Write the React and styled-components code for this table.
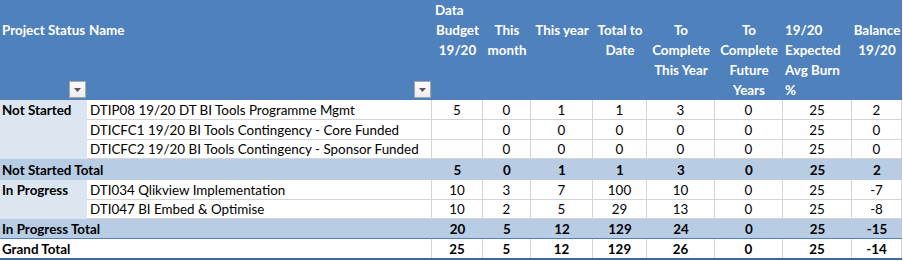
import React from "react";
import styled, { createGlobalStyle } from "styled-components";

const GlobalStyle = createGlobalStyle`
  html, body { margin: 0; padding: 0; background: #ffffff; }
  body { font-family: Lato, "Liberation Sans", sans-serif; font-size: 13.4px; color: #000; }
`;

const NUM_COLS = "51px 48px 62px 54px 68px 68px 69px 50px";
const DATA_COLS = `345px ${NUM_COLS}`;
const FULL_COLS = `87px ${DATA_COLS}`;

const Sheet = styled.div`
  width: 902px;
  display: flex;
  flex-direction: column;
`;

const Header = styled.div`
  display: grid;
  grid-template-columns: ${FULL_COLS};
  grid-template-rows: 20px 80px;
  background: #4f81bd;
  color: #ffffff;
  font-weight: 700;
  line-height: 20px;
`;

const DataLabel = styled.div`
  grid-column: 3;
  grid-row: 1;
  padding-left: 3px;
  white-space: nowrap;
`;

const FieldHead = styled.div`
  grid-row: 2;
  grid-column: ${(p) => p.$col};
  display: flex;
  flex-direction: column;
  padding-left: 2px;
  white-space: nowrap;
`;

const ColHead = styled.div`
  grid-row: 2;
  text-align: ${(p) => (p.$left ? "left" : "center")};
  padding-left: ${(p) => (p.$left ? "2px" : "0")};
  white-space: nowrap;
`;

const FilterButton = styled.div`
  margin-top: auto;
  margin-bottom: 2px;
  margin-right: 1px;
  align-self: flex-end;
  width: 17px;
  height: 17px;
  box-sizing: border-box;
  border: 1px solid #a6a6a6;
  background: linear-gradient(#fbfbfb, #ececec);
  display: flex;
  align-items: center;
  justify-content: center;
`;

const Group = styled.div`
  display: flex;
`;

const GroupLabel = styled.div`
  width: 87px;
  flex: none;
  background: #dce6f1;
  font-weight: 700;
  padding-left: 2px;
  box-sizing: border-box;
  line-height: 20px;
  white-space: nowrap;
`;

const Rows = styled.div`
  display: flex;
  flex-direction: column;
`;

const DataRow = styled.div`
  display: grid;
  grid-template-columns: ${DATA_COLS};
  height: ${(p) => p.$h}px;
`;

const Cell = styled.div`
  box-sizing: border-box;
  border-right: 1px solid #d4d4d4;
  border-bottom: 1px solid #d4d4d4;
  display: flex;
  align-items: center;
  justify-content: ${(p) => (p.$left ? "flex-start" : "center")};
  padding-left: ${(p) => (p.$left ? "3px" : "0")};
  white-space: nowrap;
`;

const TotalRow = styled.div`
  display: grid;
  grid-template-columns: ${FULL_COLS};
  height: ${(p) => p.$h}px;
  box-sizing: border-box;
  background: ${(p) => (p.$grand ? "#ffffff" : "#b8cce4")};
  font-weight: 700;
  border-bottom: ${(p) =>
    p.$grand ? "2px solid #3f679e" : p.$rule ? "1px solid #4f81bd" : "none"};
`;

const TotalLabel = styled.div`
  grid-column: span 2;
  display: flex;
  align-items: center;
  padding-left: 2px;
  white-space: nowrap;
  ${(p) => (p.$grand ? "border-right: 1px solid #d4d4d4;" : "")}
`;

const TotalCell = styled.div`
  box-sizing: border-box;
  display: flex;
  align-items: center;
  justify-content: center;
  ${(p) => (p.$grand ? "border-right: 1px solid #d4d4d4;" : "")}
`;

const Arrow = () => (
  <svg width="7" height="4" viewBox="0 0 7 4">
    <path d="M0 0 H7 L3.5 4 Z" fill="#595959" />
  </svg>
);

const heads = [
  { lines: ["Budget", "19/20"] },
  { lines: ["This", "month"] },
  { lines: ["This year"] },
  { lines: ["Total to", "Date"] },
  { lines: ["To", "Complete", "This Year"] },
  { lines: ["To", "Complete", "Future", "Years"] },
  { lines: ["19/20", "Expected", "Avg Burn", "%"], left: true },
  { lines: ["Balance", "19/20"] },
];

const groups = [
  {
    label: "Not Started",
    rows: [
      { h: 20, name: "DTIP08 19/20 DT BI Tools Programme Mgmt", v: ["5", "0", "1", "1", "3", "0", "25", "2"] },
      { h: 20, name: "DTICFC1 19/20 BI Tools Contingency - Core Funded", v: ["", "0", "0", "0", "0", "0", "25", "0"] },
      { h: 19, name: "DTICFC2 19/20 BI Tools Contingency - Sponsor Funded", v: ["", "0", "0", "0", "0", "0", "25", "0"] },
    ],
    total: { h: 21, label: "Not Started Total", v: ["5", "0", "1", "1", "3", "0", "25", "2"] },
  },
  {
    label: "In Progress",
    rows: [
      { h: 20, name: "DTI034 Qlikview Implementation", v: ["10", "3", "7", "100", "10", "0", "25", "-7"] },
      { h: 19, name: "DTI047 BI Embed & Optimise", v: ["10", "2", "5", "29", "13", "0", "25", "-8"] },
    ],
    total: { h: 20, label: "In Progress Total", v: ["20", "5", "12", "129", "24", "0", "25", "-15"], rule: true },
  },
];

const grand = ["25", "5", "12", "129", "26", "0", "25", "-14"];

export default function App() {
  return (
    <>
      <GlobalStyle />
      <Sheet>
        <Header>
          <DataLabel>Data</DataLabel>
          <FieldHead $col={1}>
            Project Status
            <FilterButton>
              <Arrow />
            </FilterButton>
          </FieldHead>
          <FieldHead $col={2}>
            Name
            <FilterButton>
              <Arrow />
            </FilterButton>
          </FieldHead>
          {heads.map((h, i) => (
            <ColHead key={i} $left={h.left}>
              {h.lines.map((l, j) => (
                <div key={j}>{l}</div>
              ))}
            </ColHead>
          ))}
        </Header>
        {groups.map((g) => (
          <React.Fragment key={g.label}>
            <Group>
              <GroupLabel>{g.label}</GroupLabel>
              <Rows>
                {g.rows.map((r) => (
                  <DataRow key={r.name} $h={r.h}>
                    <Cell $left>{r.name}</Cell>
                    {r.v.map((v, i) => (
                      <Cell key={i}>{v}</Cell>
                    ))}
                  </DataRow>
                ))}
              </Rows>
            </Group>
            <TotalRow $h={g.total.h} $rule={g.total.rule}>
              <TotalLabel>{g.total.label}</TotalLabel>
              {g.total.v.map((v, i) => (
                <TotalCell key={i}>{v}</TotalCell>
              ))}
            </TotalRow>
          </React.Fragment>
        ))}
        <TotalRow $h={21} $grand>
          <TotalLabel $grand>Grand Total</TotalLabel>
          {grand.map((v, i) => (
            <TotalCell key={i} $grand>
              {v}
            </TotalCell>
          ))}
        </TotalRow>
      </Sheet>
    </>
  );
}
